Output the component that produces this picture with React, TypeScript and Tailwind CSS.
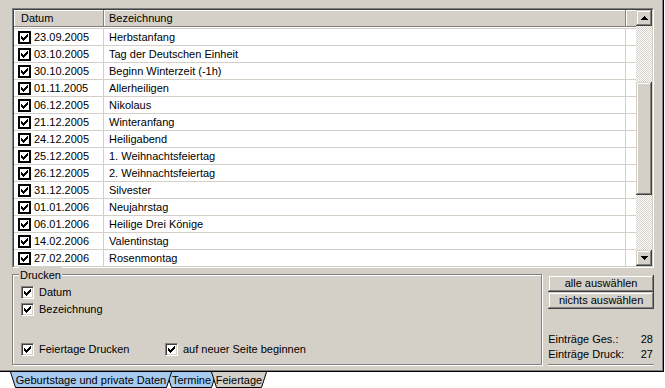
import React from 'react';

const rows: [string, string][] = [
  ['23.09.2005', 'Herbstanfang'],
  ['03.10.2005', 'Tag der Deutschen Einheit'],
  ['30.10.2005', 'Beginn Winterzeit (-1h)'],
  ['01.11.2005', 'Allerheiligen'],
  ['06.12.2005', 'Nikolaus'],
  ['21.12.2005', 'Winteranfang'],
  ['24.12.2005', 'Heiligabend'],
  ['25.12.2005', '1. Weihnachtsfeiertag'],
  ['26.12.2005', '2. Weihnachtsfeiertag'],
  ['31.12.2005', 'Silvester'],
  ['01.01.2006', 'Neujahrstag'],
  ['06.01.2006', 'Heilige Drei Könige'],
  ['14.02.2006', 'Valentinstag'],
  ['27.02.2006', 'Rosenmontag'],
];

function Check() {
  // classic 7x7 check glyph, one 3px column per x
  const tops = [2, 3, 4, 3, 2, 1, 0];
  return (
    <svg width="7" height="7" viewBox="0 0 7 7" shapeRendering="crispEdges">
      {tops.map((t, i) => (
        <rect key={i} x={i} y={t} width="1" height="3" fill="#000" />
      ))}
    </svg>
  );
}

function ListCheck() {
  return (
    <div className="w-[13px] h-[13px] border-2 border-black bg-white flex items-center justify-center shrink-0">
      <Check />
    </div>
  );
}

function Box({ label }: { label: string }) {
  return (
    <div className="flex items-center gap-[5px] h-[13px] leading-[13px]">
      <div className="w-[13px] h-[13px] bg-white border-t border-l border-[#808080] border-r border-b border-r-white border-b-white shadow-[inset_1px_1px_#404040,inset_-1px_-1px_#d4d0c8] flex items-center justify-center">
        <Check />
      </div>
      <span>{label}</span>
    </div>
  );
}

const raised =
  'shadow-[inset_-1px_-1px_#404040,inset_1px_1px_#d4d0c8,inset_-2px_-2px_#808080,inset_2px_2px_#fff]';

function ScrollBtn({ down }: { down?: boolean }) {
  return (
    <div className={`h-[16px] bg-[#d4d0c8] flex items-center justify-center ${raised}`}>
      <svg width="7" height="4" viewBox="0 0 7 4" shapeRendering="crispEdges">
        <path d={down ? 'M0 0h7L3.5 4z' : 'M3.5 0L7 4H0z'} fill="#000" />
      </svg>
    </div>
  );
}

function Tab({ label, active, w, z }: { label: string; active?: boolean; w: number; z: string }) {
  const fill = active ? '#d4d0c8' : '#a6caf0';
  return (
    <div className={`relative h-[16px] -mr-[6px] flex items-center justify-center ${z}`} style={{ width: w }}>
      <svg className="absolute inset-0" width={w} height="16" viewBox={`0 0 ${w} 16`}>
        <path d={`M0.5 0 L5.5 15.5 H${w - 5.5} L${w - 0.5} 0`} fill={fill} stroke="#000" strokeWidth="1" />
      </svg>
      <span className="relative leading-[14px] -mt-[1px]">{label}</span>
    </div>
  );
}

export default function App() {
  return (
    <div className="w-[665px] h-[388px] bg-white font-['Liberation_Sans',Arial,sans-serif] text-[11px] text-black overflow-hidden">
      <div className="w-[664px] h-[372px] border-r border-b border-black">
        <div className="h-full bg-[#d4d0c8] border-r border-b border-[#808080] pt-[8px] pl-[12px] pr-[8px] flex flex-col">
          {/* list */}
          <div className="h-[260px] border-t border-l border-[#808080] border-r border-b border-r-white border-b-white">
            <div className="h-full flex border-t border-l border-[#404040] border-r border-b border-r-[#d4d0c8] border-b-[#d4d0c8] bg-white overflow-hidden">
              <div className="w-[622px] flex flex-col">
                <div className="flex h-[17px] shrink-0">
                  <div className="w-[90px] bg-[#d4d0c8] pl-[7px] flex items-center border-r border-b border-[#808080] shadow-[inset_1px_1px_#fff]">
                    Datum
                  </div>
                  <div className="w-[522px] bg-[#d4d0c8] pl-[5px] flex items-center border-r border-b border-[#808080] shadow-[inset_1px_1px_#fff]">
                    Bezeichnung
                  </div>
                  <div className="w-[10px] bg-[#d4d0c8] border-b border-[#808080] shadow-[inset_1px_1px_#fff]" />
                </div>
                <div className="mt-[1px] border-t border-[#d4d0c8]">
                  {rows.map(([d, n]) => (
                    <div key={d} className="flex h-[17px] border-b border-[#d4d0c8]">
                      <div className="w-[90px] border-r border-[#d4d0c8] pl-[4px] flex items-center gap-[3px]">
                        <ListCheck />
                        <span>{d}</span>
                      </div>
                      <div className="w-[522px] border-r border-[#d4d0c8] pl-[5px] flex items-center">{n}</div>
                      <div className="w-[10px]" />
                    </div>
                  ))}
                </div>
              </div>
              <div className="w-[16px] flex flex-col bg-[repeating-conic-gradient(#fff_0_25%,#d4d0c8_0_50%)] bg-[length:2px_2px]">
                <ScrollBtn />
                <div className="h-[56px]" />
                <div className={`h-[113px] bg-[#d4d0c8] ${raised}`} />
                <div className="flex-1" />
                <ScrollBtn down />
              </div>
            </div>
          </div>

          {/* bottom */}
          <div className="flex mt-[6px]">
            <div className="relative w-[531px] h-[91px] border border-[#808080] shadow-[inset_1px_1px_#fff,1px_1px_#fff] pl-[8px] pt-[11px]">
              <span className="absolute -top-[8px] left-[6px] bg-[#d4d0c8] px-[1px]">Drucken</span>
              <div className="flex flex-col gap-[4px]">
                <Box label="Datum" />
                <Box label="Bezeichnung" />
              </div>
              <div className="flex mt-[27px]">
                <div className="w-[144px]">
                  <Box label="Feiertage Drucken" />
                </div>
                <Box label="auf neuer Seite beginnen" />
              </div>
            </div>
            <div className="ml-[6px] w-[106px] flex flex-col pt-[1px]">
              <div className={`h-[17px] bg-[#d4d0c8] flex items-center justify-center ${raised}`}>alle auswählen</div>
              <div className={`h-[17px] bg-[#d4d0c8] flex items-center justify-center ${raised}`}>nichts auswählen</div>
              <div className="mt-[23px] flex justify-between pr-[1px] h-[15px] items-center">
                <span>Einträge Ges.:</span>
                <span>28</span>
              </div>
              <div className="flex justify-between pr-[1px] h-[15px] items-center">
                <span>Einträge Druck:</span>
                <span>27</span>
              </div>
              <div className="mt-[2px] border-t border-[#808080] border-b border-b-white" />
            </div>
          </div>
        </div>
      </div>

      {/* sheet tabs */}
      <div className="flex pl-[10px]">
        <Tab label="Geburtstage und private Daten" w={162} z="z-30" />
        <Tab label="Termine" w={51} z="z-20" />
        <Tab label="Feiertage" active w={56} z="z-40" />
      </div>
    </div>
  );
}
